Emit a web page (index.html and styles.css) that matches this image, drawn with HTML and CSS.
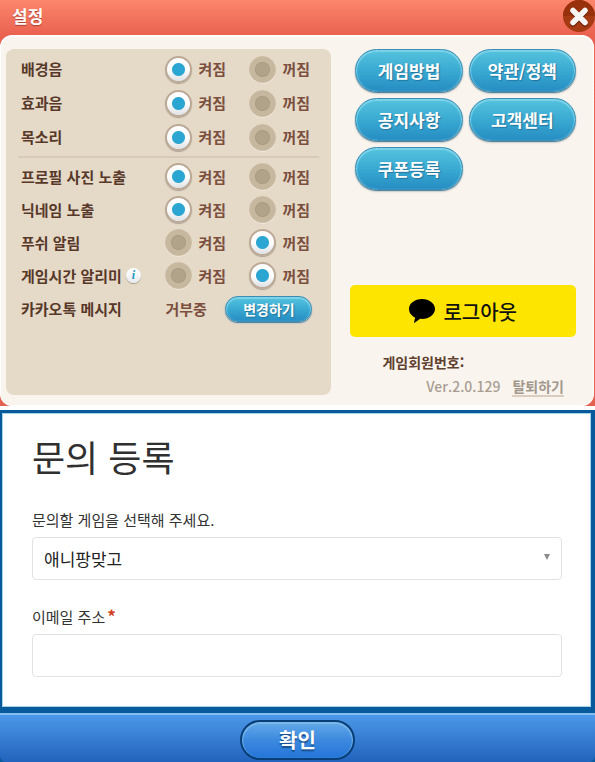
FILE: index.html
```html
<!DOCTYPE html>
<html lang="ko">
  <head>
    <meta charset="UTF-8" />
    <meta name="viewport" content="width=device-width, initial-scale=1.0" />
    <title>설정</title>
    <link rel="stylesheet" href="styles.css">
  </head>
  <body>
    <section class="settings">
      <header class="settings-header">
        <h1>설정</h1>
        <button class="close-btn" aria-label="닫기">
          <svg viewBox="0 0 32 32" width="32" height="32">
            <circle cx="16" cy="16" r="16" fill="#a63a12" />
            <path d="M0 16a16 16 0 0 1 32 0z" fill="#98310b" />
            <path d="M10 12l12 12M22 12L10 24" stroke="#6e2006" stroke-width="5.5" stroke-linecap="round" />
            <path d="M10 10.500l12 12M22 10.500l-12 12" stroke="#f7f5f3" stroke-width="5.500" stroke-linecap="round" />
          </svg>
        </button>
      </header>

      <div class="settings-body">
        <div class="options">
          <div class="group group-sound">
            <div class="row" role="radiogroup" aria-label="배경음">
              <span class="row-label">배경음</span>
              <label class="choice"><input type="radio" name="bgm" checked />켜짐</label>
              <label class="choice"><input type="radio" name="bgm" />꺼짐</label>
            </div>
            <div class="row" role="radiogroup" aria-label="효과음">
              <span class="row-label">효과음</span>
              <label class="choice"><input type="radio" name="effect" checked />켜짐</label>
              <label class="choice"><input type="radio" name="effect" />꺼짐</label>
            </div>
            <div class="row" role="radiogroup" aria-label="목소리">
              <span class="row-label">목소리</span>
              <label class="choice"><input type="radio" name="voice" checked />켜짐</label>
              <label class="choice"><input type="radio" name="voice" />꺼짐</label>
            </div>
          </div>

          <div class="group group-profile">
            <div class="row" role="radiogroup" aria-label="프로필 사진 노출">
              <span class="row-label">프로필 사진 노출</span>
              <label class="choice"><input type="radio" name="photo" checked />켜짐</label>
              <label class="choice"><input type="radio" name="photo" />꺼짐</label>
            </div>
            <div class="row" role="radiogroup" aria-label="닉네임 노출">
              <span class="row-label">닉네임 노출</span>
              <label class="choice"><input type="radio" name="nickname" checked />켜짐</label>
              <label class="choice"><input type="radio" name="nickname" />꺼짐</label>
            </div>
            <div class="row" role="radiogroup" aria-label="푸쉬 알림">
              <span class="row-label">푸쉬 알림</span>
              <label class="choice"><input type="radio" name="push" />켜짐</label>
              <label class="choice"><input type="radio" name="push" checked />꺼짐</label>
            </div>
            <div class="row" role="radiogroup" aria-label="게임시간 알리미">
              <span class="row-label">게임시간 알리미 <button class="info-btn">i</button></span>
              <label class="choice"><input type="radio" name="playtime" />켜짐</label>
              <label class="choice"><input type="radio" name="playtime" checked />꺼짐</label>
            </div>
            <div class="row row-message">
              <span class="row-label">카카오톡 메시지</span>
              <span class="state">거부중</span>
              <button class="pill pill-small">변경하기</button>
            </div>
          </div>
        </div>

        <div class="side">
          <div class="links">
            <button class="pill">게임방법</button>
            <button class="pill">약관/정책</button>
            <button class="pill">공지사항</button>
            <button class="pill">고객센터</button>
            <button class="pill">쿠폰등록</button>
          </div>
          <div class="account">
            <button class="logout-btn">
              <svg viewBox="0 0 26 24" width="26" height="24">
                <path d="M13 0C5.800 0 0 4.400 0 10c0 3.700 2.500 6.900 6.200 8.600L5 23.500c0 .4.300.5.600.3l5.600-4c.6.100 1.200.1 1.800.1 7.200 0 13-4.400 13-9.900S20.200 0 13 0z" fill="#000" />
              </svg>
              로그아웃
            </button>
            <p class="member">게임회원번호:</p>
            <p class="version"><span>Ver.2.0.129</span><a href="#">탈퇴하기</a></p>
          </div>
        </div>
      </div>
    </section>

    <form class="inquiry">
      <div class="inquiry-body">
        <h2>문의 등록</h2>
        <label class="field-label" for="game">문의할 게임을 선택해 주세요.</label>
        <div class="select">
          <select class="field" id="game">
            <option>애니팡맞고</option>
          </select>
        </div>
        <label class="field-label" for="email">이메일 주소<span class="required">*</span></label>
        <input class="field" type="email" id="email" required />
      </div>
      <footer class="inquiry-footer">
        <button class="confirm-btn" type="button">확인</button>
      </footer>
    </form>
  </body>
</html>
```

FILE: styles.css
```css
* {
  box-sizing: border-box;
}
body {
  margin: 0;
  background: #fff;
  font-family: "Noto Sans CJK KR", sans-serif;
  font-size: 15px;
  line-height: 20px;
}
h1,
h2,
p {
  margin: 0;
}
button,
select,
input {
  margin: 0;
  font-family: inherit;
}
button {
  padding: 0;
  border: none;
  cursor: pointer;
}

/* Settings */
.settings {
  background: linear-gradient(#fc866b, #ea6150 36px, #e4604f);
}
.settings-header {
  display: flex;
  justify-content: space-between;
  align-items: center;
  height: 35px;
  padding: 0 0 3px 12px;
}
.settings-header h1 {
  font-size: 17px;
  color: #fff;
  text-shadow: 0 1px 1px #a8402f;
}
.close-btn {
  height: 32px;
  background: none;
}
.close-btn svg {
  display: block;
}
.settings-body {
  display: grid;
  grid-template-columns: 326fr 226fr;
  gap: 19px;
  margin-right: 1px;
  padding: 12px 17px 8px 5px;
  border: 1px solid #fff;
  border-top-width: 2px;
  border-radius: 12px;
  background: #f9f5ee;
}
.options {
  margin-bottom: 2px;
  padding: 3px 12px 0;
  min-height: 346px;
  border-radius: 8px;
  background: #e5d9c8;
}
.group-sound {
  padding-bottom: 2px;
  border-bottom: 2px solid #d8cab7;
}
.group-profile {
  padding-top: 2px;
}
.row {
  display: grid;
  grid-template-columns: 1fr 84px 70px;
  align-items: center;
  height: 33px;
  padding-left: 3px;
  font-weight: bold;
  color: #7b4f3d;
}
.group-sound .row {
  height: 34px;
}
.row-message {
  grid-template-columns: 1fr 60px 87px;
  margin-right: 7px;
}
.row-label {
  display: flex;
  align-items: center;
  gap: 4px;
  white-space: nowrap;
  color: #573829;
}
.choice {
  display: flex;
  align-items: center;
  gap: 6px;
  white-space: nowrap;
}
.choice input {
  flex: none;
  appearance: none;
  width: 27px;
  height: 27px;
  border: 1px solid #cabaa3;
  border-radius: 50%;
  background: radial-gradient(circle, #b1a28a 6px, #a99a82 7px, #c6b79f 8px);
  box-shadow: 0 1px 0 #f0e7da;
}
.choice input:checked {
  border: 2px solid #bba995;
  background: radial-gradient(circle, #2ba5d2 6px, transparent 7px),
    linear-gradient(#fff 50%, #dfe1e4);
  box-shadow: 0 1px 1px #ada195;
}
.info-btn {
  width: 15px;
  height: 15px;
  border-radius: 50%;
  background: linear-gradient(#fff, #e8ebed);
  box-shadow: 0 1px 1px #a99b8b;
  font: italic bold 12px/15px "Liberation Serif", serif;
  color: #2196c8;
}

/* Blue buttons */
.pill {
  height: 43px;
  border: 1px solid #3a8db5;
  border-radius: 22px;
  background: linear-gradient(#55c3de, #3aaad2 50%, #268dc3);
  box-shadow: inset 0 1px 1px 1px #7ed3e8, 0 1px 1px #477f9c, 0 2px 2px #d8d5cf;
  font-size: 17px;
  font-weight: bold;
  line-height: 24px;
  white-space: nowrap;
  color: #fff;
  text-shadow: 1px 1px 1px #24759c;
}
.pill-small {
  height: 26px;
  font-size: 14px;
  line-height: 20px;
}

.side {
  display: flex;
  flex-direction: column;
  justify-content: space-between;
}
.links {
  display: grid;
  grid-template-columns: 1fr 1fr;
  gap: 6px;
  padding-left: 5px;
}
.logout-btn {
  display: flex;
  justify-content: center;
  align-items: center;
  gap: 8px;
  width: 100%;
  height: 52px;
  border-radius: 5px;
  background: #fde500;
  font-size: 20px;
  font-weight: 500;
  color: #111;
}
.member {
  margin: 15px 0 5px 32px;
  font-size: 14px;
  font-weight: bold;
  color: #60402f;
}
.version {
  display: flex;
  justify-content: flex-end;
  gap: 12px;
  padding-right: 12px;
  font-size: 14px;
  font-weight: 500;
  line-height: 18px;
  color: #a99d93;
}
.version a {
  border-bottom: 2px solid #dacdbf;
  font-weight: bold;
  color: #a3978d;
  text-decoration: none;
}

/* Inquiry form */
.inquiry {
  margin-top: 4px;
  padding-top: 3px;
  background: #075a9c;
}
.inquiry-body {
  margin: 0 4px 0 2px;
  padding: 18px 28px 29px 29px;
  border: 1px solid #a6d3e5;
  background: #fff;
}
.inquiry h2 {
  margin-bottom: 30px;
  font-size: 36px;
  font-weight: 400;
  line-height: 48px;
  color: #303030;
}
.field-label {
  display: block;
  margin-bottom: 7px;
  color: #333;
}
.required {
  margin-left: 2px;
  font-size: 17px;
  font-weight: bold;
  line-height: 18px;
  color: #d2401c;
}
.field {
  display: block;
  width: 100%;
  height: 43px;
  padding: 0 11px;
  appearance: none;
  border: 1px solid #e2e2e2;
  border-radius: 4px;
  background: #fff;
  font-size: 17px;
  color: #222;
}
.select {
  position: relative;
  margin-bottom: 27px;
}
.select::after {
  content: "";
  position: absolute;
  top: 17px;
  right: 12px;
  border: 3px solid transparent;
  border-top: 6px solid #8c8c8c;
  border-bottom: 0;
  pointer-events: none;
}
.inquiry-footer {
  display: flex;
  justify-content: center;
  align-items: flex-start;
  height: 49px;
  margin-top: 6px;
  padding-top: 5px;
  border-top: 2px solid #83bdf0;
  border-radius: 0 0 6px 6px;
  background: linear-gradient(#4c98e8, #2263bd);
}
.confirm-btn {
  width: 115px;
  height: 40px;
  border: 2px solid #093f78;
  border-radius: 20px;
  background: linear-gradient(#64aae9, #3c89df 50%, #2475d8);
  box-shadow: inset 0 1px 1px 1px #79b8ec;
  font-size: 20px;
  font-weight: bold;
  line-height: 28px;
  color: #fff;
  text-shadow: 0 2px 1px #17508f;
}
```
